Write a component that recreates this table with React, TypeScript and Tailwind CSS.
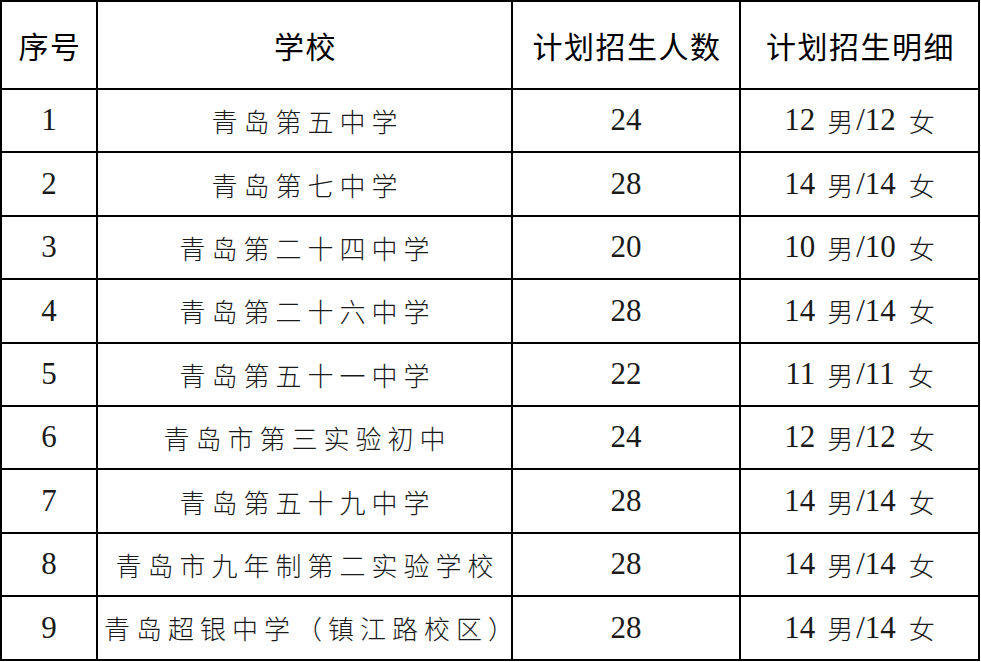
const rows = [
  { no: "1", school: "青岛第五中学", total: "24", boys: "12", girls: "12" },
  { no: "2", school: "青岛第七中学", total: "28", boys: "14", girls: "14" },
  { no: "3", school: "青岛第二十四中学", total: "20", boys: "10", girls: "10" },
  { no: "4", school: "青岛第二十六中学", total: "28", boys: "14", girls: "14" },
  { no: "5", school: "青岛第五十一中学", total: "22", boys: "11", girls: "11" },
  { no: "6", school: "青岛市第三实验初中", total: "24", boys: "12", girls: "12" },
  { no: "7", school: "青岛第五十九中学", total: "28", boys: "14", girls: "14" },
  { no: "8", school: "青岛市九年制第二实验学校", total: "28", boys: "14", girls: "14" },
  { no: "9", school: "青岛超银中学（镇江路校区）", total: "28", boys: "14", girls: "14" },
];

const headers = ["序号", "学校", "计划招生人数", "计划招生明细"];

const cell = "flex items-center justify-center border-r-2 border-b-2 border-black";
const num = "[font-family:'Liberation_Serif',serif] text-[31px] text-[#1a1a1a]";
const cjk = "[font-family:'Noto_Sans_CJK_SC',sans-serif] text-[26px] font-light text-[#1a1a1a]";

export default function App() {
  return (
    <div className="w-[981px] h-[662px] bg-white">
      <div className="grid grid-cols-[96px_415px_228px_239px] w-[980px] border-l-2 border-t-2 border-black">
        {headers.map((h) => (
          <div
            key={h}
            className={`${cell} h-[88px] pl-[2px] [font-family:'Noto_Sans_CJK_SC',sans-serif] text-[30px] tracking-[1.5px] text-black`}
          >
            {h}
          </div>
        ))}
        {rows.map((r) => (
          <div key={r.no} className="contents">
            <div className={`${cell} h-[63.4px] ${num}`}>{r.no}</div>
            <div className={`${cell} h-[63.4px] ${cjk} tracking-[6px] pl-[6px]`}>{r.school}</div>
            <div className={`${cell} h-[63.4px] ${num}`}>{r.total}</div>
            <div className={`${cell} h-[63.4px] gap-[3px]`}>
              <span className={num}>{r.boys}</span>
              <span className={`${cjk} ml-[9px]`}>男</span>
              <span className={num}>/{r.girls}</span>
              <span className={`${cjk} ml-[10px]`}>女</span>
            </div>
          </div>
        ))}
      </div>
    </div>
  );
}
